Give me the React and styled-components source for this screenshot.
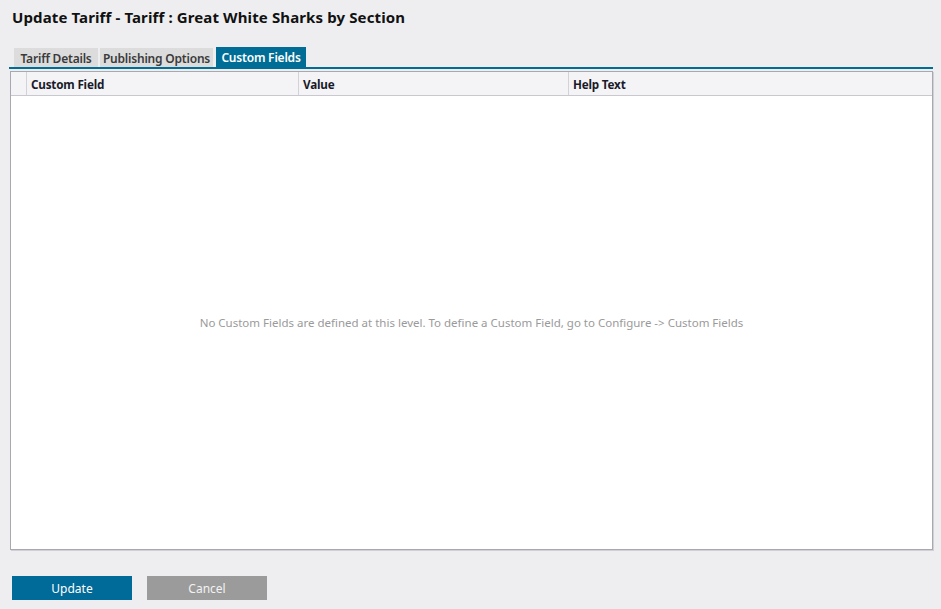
import React, { useState } from "react";
import styled, { createGlobalStyle } from "styled-components";

const GlobalStyle = createGlobalStyle`
  html, body {
    margin: 0;
    padding: 0;
    background: #eeeef0;
  }
  body {
    font-family: "Segoe UI", "Noto Sans", "Open Sans", sans-serif;
    color: #111;
  }
`;

const Page = styled.div`
  width: 941px;
  height: 609px;
  box-sizing: border-box;
  padding: 6px 8px 0 9px;
  display: flex;
  flex-direction: column;
`;

const Title = styled.h1`
  margin: 0 0 0 3px;
  font-size: 15px;
  font-weight: 700;
  line-height: 22px;
  letter-spacing: 0.12px;
`;

const TabBar = styled.div`
  margin-top: 19px;
  display: flex;
  align-items: flex-end;
  padding-left: 5px;
  border-bottom: 2px solid #006d96;
`;

const Tab = styled.button`
  border: none;
  margin: 0 0 0 ${(p) => p.$gap}px;
  padding: 1px 0 0;
  width: ${(p) => p.$width}px;
  height: ${(p) => (p.$active ? "20px" : "19px")};
  font-family: inherit;
  font-size: 12px;
  font-weight: 600;
  letter-spacing: -0.2px;
  cursor: pointer;
  background: ${(p) => (p.$active ? "#006d96" : "#dcdcdc")};
  color: ${(p) => (p.$active ? "#fff" : "#3a3a3a")};
`;

const Grid = styled.div`
  margin-top: 2px;
  margin-left: 1px;
  height: 477px;
  background: #fff;
  border: 1px solid #a8a8b0;
  box-shadow: 1px 1px 0 #d0d0d6;
  display: flex;
  flex-direction: column;
`;

const HeaderRow = styled.div`
  display: grid;
  grid-template-columns: 15px 272px 270px 1fr;
  height: 23px;
  background: #f4f4f6;
  border-bottom: 1px solid #c8c8ce;
`;

const HeaderCell = styled.div`
  display: flex;
  align-items: center;
  padding-left: 4px;
  font-size: 11.7px;
  font-weight: 700;
  letter-spacing: -0.2px;
  color: #1a1a2a;
  border-left: ${(p) => (p.$first ? "none" : "1px solid #d2d2d8")};
`;

const Empty = styled.div`
  flex: 1;
  display: flex;
  align-items: center;
  justify-content: center;
  font-size: 11.5px;
  color: #9a9a9a;
`;

const Actions = styled.div`
  margin-top: 26px;
  margin-left: 3px;
  display: flex;
  gap: 15px;
`;

const Button = styled.button`
  width: 120px;
  height: 24px;
  border: none;
  font-family: inherit;
  font-size: 12px;
  color: ${(p) => (p.$primary ? "#fff" : "#f2f2f2")};
  background: ${(p) => (p.$primary ? "#006a98" : "#9b9b9b")};
  cursor: pointer;
`;

const tabs = [
  { label: "Tariff Details", width: 84, gap: 0 },
  { label: "Publishing Options", width: 113, gap: 2 },
  { label: "Custom Fields", width: 90, gap: 3 },
];
const columns = ["Custom Field", "Value", "Help Text"];

export default function App() {
  const [active, setActive] = useState(2);
  return (
    <>
      <GlobalStyle />
      <Page>
        <Title>Update Tariff - Tariff : Great White Sharks by Section</Title>
        <TabBar>
          {tabs.map((t, i) => (
            <Tab
              key={t.label}
              $active={i === active}
              $width={t.width}
              $gap={t.gap}
              onClick={() => setActive(i)}
            >
              {t.label}
            </Tab>
          ))}
        </TabBar>
        <Grid>
          <HeaderRow>
            <HeaderCell $first />
            {columns.map((c) => (
              <HeaderCell key={c}>{c}</HeaderCell>
            ))}
          </HeaderRow>
          <Empty>
            No Custom Fields are defined at this level. To define a Custom Field, go to Configure -&gt; Custom Fields
          </Empty>
        </Grid>
        <Actions>
          <Button $primary>Update</Button>
          <Button>Cancel</Button>
        </Actions>
      </Page>
    </>
  );
}
